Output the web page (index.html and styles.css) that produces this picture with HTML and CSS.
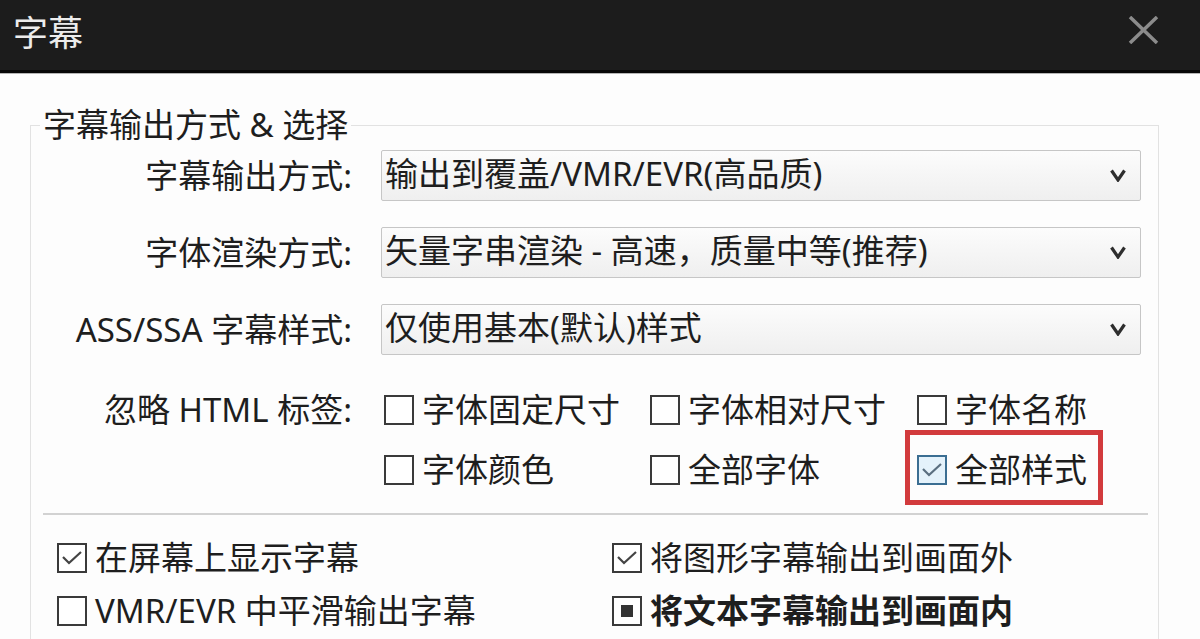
FILE: index.html
```html
<!DOCTYPE html>
<html lang="zh-CN">

<head>
    <meta charset="UTF-8">
    <title>字幕</title>
    <link rel="stylesheet" href="styles.css">
</head>

<body>
    <div class="titlebar">
        <span class="title">字幕</span>
        <svg class="close" width="31" height="28" viewBox="0 0 31 28"><path d="M2 1L29 27M29 1L2 27" stroke="#8c8c8c" stroke-width="3.5" fill="none"/></svg>
    </div>

    <fieldset class="group">
        <legend>字幕输出方式 &amp; 选择</legend>
        <div class="form">
            <label class="lbl">字幕输出方式:</label>
            <div class="select"><span>输出到覆盖/VMR/EVR(高品质)</span><svg width="16" height="13" viewBox="0 0 16 13"><path d="M1.5 1.5L8 11L14.5 1.5" stroke="#2e2e2e" stroke-width="3.2" fill="none"/></svg></div>

            <label class="lbl">字体渲染方式:</label>
            <div class="select"><span>矢量字串渲染 - 高速，质量中等(推荐)</span><svg width="16" height="13" viewBox="0 0 16 13"><path d="M1.5 1.5L8 11L14.5 1.5" stroke="#2e2e2e" stroke-width="3.2" fill="none"/></svg></div>

            <label class="lbl">ASS/SSA 字幕样式:</label>
            <div class="select"><span>仅使用基本(默认)样式</span><svg width="16" height="13" viewBox="0 0 16 13"><path d="M1.5 1.5L8 11L14.5 1.5" stroke="#2e2e2e" stroke-width="3.2" fill="none"/></svg></div>

            <label class="lbl lbl-top">忽略 HTML 标签:</label>
            <div class="checks">
                <div class="chk"><span class="box"></span>字体固定尺寸</div>
                <div class="chk"><span class="box"></span>字体相对尺寸</div>
                <div class="chk"><span class="box"></span>字体名称</div>
                <div class="chk"><span class="box"></span>字体颜色</div>
                <div class="chk"><span class="box"></span>全部字体</div>
                <div class="chk marked"><span class="box on hover"><svg width="22" height="16" viewBox="0 0 22 16"><path d="M2 7L8 13L20 2" stroke="#5a6f80" stroke-width="2.2" fill="none"/></svg></span>全部样式</div>
            </div>
        </div>

        <hr class="sep">

        <div class="bottom">
            <div class="chk"><span class="box on"><svg width="22" height="16" viewBox="0 0 22 16"><path d="M2 7L8 13L20 2" stroke="#444" stroke-width="2.2" fill="none"/></svg></span>在屏幕上显示字幕</div>
            <div class="chk"><span class="box on"><svg width="22" height="16" viewBox="0 0 22 16"><path d="M2 7L8 13L20 2" stroke="#444" stroke-width="2.2" fill="none"/></svg></span>将图形字幕输出到画面外</div>
            <div class="chk"><span class="box"></span>VMR/EVR 中平滑输出字幕</div>
            <div class="chk strong"><span class="box mixed"><i></i></span>将文本字幕输出到画面内</div>
        </div>
    </fieldset>
</body>

</html>
```

FILE: styles.css
```css
html,body,div,fieldset,legend,hr,span,label{margin:0;padding:0;}
body{background:#fdfdfd;color:#1e1e1e;font-family:"Noto Sans","Noto Sans CJK SC",sans-serif;font-size:33px;line-height:40px;overflow:hidden;height:639px;}

.titlebar{height:70px;background:#1c1c1c;border-bottom:3px solid #070707;box-shadow:0 1px 0 #b5b5b5;display:flex;align-items:center;justify-content:space-between;padding:0 41px 0 13px;}
.titlebar .title{color:#ececec;font-size:35px;line-height:40px;margin-top:-4px;}
.titlebar .close{display:block;margin-top:-11px;}

.group{margin:35px 41px 0 30px;padding:0 0 60px;border:1px solid #e2e2e2;min-width:0;}
.group legend{margin-left:9px;padding:0 3px;line-height:34px;font-size:33px;}

.form{display:grid;grid-template-columns:326px 1fr;column-gap:24px;row-gap:26px;padding:8px 17px 0 0;}
.lbl{text-align:right;padding-right:5px;align-self:center;}
.lbl-top{align-self:start;margin-top:9px;}

.select{height:49px;border:1px solid #c6c6c6;border-radius:2px;background:linear-gradient(to bottom,#fcfcfc,#efefef);display:flex;align-items:center;justify-content:space-between;padding:0 14px 0 3px;}
.select span{line-height:40px;margin-top:-3px;}

.checks{display:grid;grid-template-columns:266px 267px 1fr;grid-auto-rows:40px;row-gap:20px;margin-top:9px;padding-left:3px;}
.chk{display:flex;align-items:center;gap:8px;white-space:nowrap;position:relative;}
.box{width:26px;height:26px;border:2px solid #3a3a3a;flex:none;display:flex;align-items:center;justify-content:center;background:#fff;}
.box.hover{border-color:#3b6e92;background:#e4f2fb;}
.box.mixed i{width:12px;height:12px;background:#333;display:block;}
.marked::after{content:"";position:absolute;left:-12px;top:-20px;width:188px;height:65px;border:5px solid #d23b3d;}
.strong{font-weight:700;}

.sep{border:0;height:2px;background:#d2d2d2;margin:23px 10px 0 12px;}

.bottom{display:grid;grid-template-columns:555px 1fr;grid-auto-rows:40px;row-gap:13px;margin-top:23px;padding-left:26px;}
```
